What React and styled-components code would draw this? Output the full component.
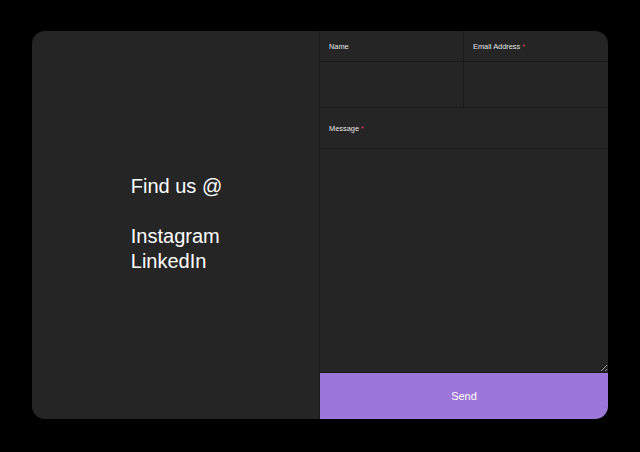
import React from "react";
import styled, { createGlobalStyle } from "styled-components";

const Global = createGlobalStyle`
  html, body { margin: 0; padding: 0; background: #000; }
  body { font-family: "Liberation Sans", Arial, sans-serif; }
  * { box-sizing: border-box; }
`;

const Page = styled.div`
  width: 640px;
  height: 452px;
  padding: 31px 32px 33px;
  background: #000;
`;

const Card = styled.div`
  display: grid;
  grid-template-columns: 287px minmax(0, 1fr);
  height: 388px;
  background: #252525;
  border-radius: 13px;
  overflow: hidden;
`;

const Info = styled.div`
  display: flex;
  align-items: center;
  justify-content: center;
  padding: 0 0 2px 2px;
`;

const InfoText = styled.div`
  color: #fff;
  font-size: 20px;
  line-height: 25px;
`;

const Line = styled.div`
  height: 25px;
`;

const Form = styled.form`
  display: flex;
  flex-direction: column;
  border-left: 1px solid #191919;
  margin: 0;
  min-width: 0;
`;

const Row = styled.div`
  display: grid;
  grid-template-columns: minmax(0, 1fr) minmax(0, 1fr);
`;

const Field = styled.div`
  display: flex;
  flex-direction: column;
  border-right: ${(p) => (p.$divider ? "1px solid #191919" : "none")};
  flex: ${(p) => (p.$grow ? 1 : "none")};
  min-height: 0;
  min-width: 0;
`;

const Label = styled.label`
  display: flex;
  align-items: center;
  height: ${(p) => p.$h}px;
  padding-left: 9px;
  font-size: 7.4px;
  color: #e6e6e6;
  border-bottom: 1px solid #191919;
  flex: none;
`;

const Star = styled.span`
  color: #e0405e;
  margin-left: 2px;
`;

const Input = styled.input`
  width: 100%;
  min-width: 0;
  height: 46px;
  border: none;
  border-bottom: 1px solid #191919;
  background: transparent;
  outline: none;
  color: #fff;
  padding: 0 9px;
  font-family: inherit;
`;

const Textarea = styled.textarea`
  flex: 1;
  width: 100%;
  border: none;
  border-bottom: 1px solid #191919;
  background: transparent;
  outline: none;
  color: #fff;
  padding: 9px;
  font-family: inherit;
  resize: vertical;
`;

const Send = styled.button`
  width: 100%;
  height: 46px;
  flex: none;
  border: none;
  background: #9c76d8;
  color: #fff;
  font-family: "Liberation Sans", Arial, sans-serif;
  font-size: 11px;
  cursor: pointer;
`;

export default function App() {
  return (
    <>
      <Global />
      <Page>
        <Card>
          <Info>
            <InfoText>
              <div>Find us @</div>
              <Line />
              <div>Instagram</div>
              <div>LinkedIn</div>
            </InfoText>
          </Info>
          <Form onSubmit={(e) => e.preventDefault()}>
            <Row>
              <Field $divider>
                <Label $h={31}>Name</Label>
                <Input type="text" />
              </Field>
              <Field>
                <Label $h={31}>
                  Email Address<Star>*</Star>
                </Label>
                <Input type="email" />
              </Field>
            </Row>
            <Field $grow>
              <Label $h={41}>
                Message<Star>*</Star>
              </Label>
              <Textarea />
            </Field>
            <Send type="submit">Send</Send>
          </Form>
        </Card>
      </Page>
    </>
  );
}
